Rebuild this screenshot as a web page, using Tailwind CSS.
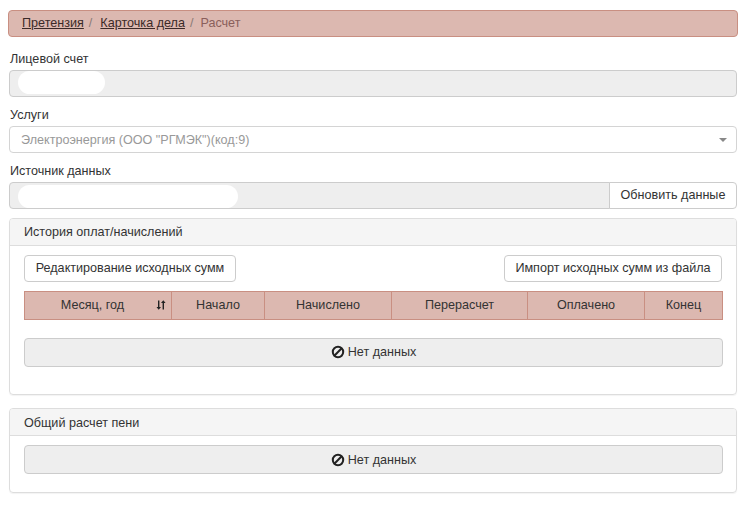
<!DOCTYPE html>
<html><head><meta charset="utf-8"><script src="https://cdn.jsdelivr.net/npm/@tailwindcss/browser@4"></script></head>
<body class="bg-white">
<div class="w-[742px] h-[513px] overflow-hidden pt-[10px] pl-[9px] pr-[5px] font-['Liberation_Sans',Arial,sans-serif] text-[12.6px] leading-[18px] text-[#333]">
  <nav class="-ml-px -mr-px h-[27px] flex items-center pl-[13px] pb-[2px] bg-[#dcb8b0] border border-[#c98f82] rounded-[4px] text-[#333]">
    <a class="underline text-[#3b2a28]">Претензия</a><span class="pl-[5px] pr-[7px] text-[#8a7a76]">/</span>
    <a class="underline ml-[1px] text-[#3b2a28]">Карточка дела</a><span class="pl-[5px] pr-[6px] text-[#8a7a76]">/</span>
    <span class="ml-[1px] text-[#8a5f5b]">Расчет</span>
  </nav>
  <div class="mt-[12px] h-[21px] pl-px pt-px">Лицевой счет</div>
  <div class="h-[27px] relative bg-[#eeeeee] border border-[#cccccc] rounded-[4px]">
    <div class="absolute left-[8px] top-0 w-[87px] h-[23px] bg-white rounded-full"></div>
  </div>
  <div class="mt-[8px] h-[21px] pl-px pt-px">Услуги</div>
  <div class="h-[27px] flex items-center justify-between pl-[11px] pr-[9px] bg-white border border-[#d4d4d4] rounded-[4px] text-[#999]">
    <span>Электроэнергия (ООО "РГМЭК")(код:9)</span>
    <span class="w-0 h-0 border-x-[4px] border-x-transparent border-t-[4px] border-t-[#888]"></span>
  </div>
  <div class="mt-[8px] h-[21px] pl-px pt-px">Источник данных</div>
  <div class="h-[27px] flex">
    <div class="flex-1 relative bg-[#eeeeee] border border-[#cccccc] rounded-l-[4px]">
      <div class="absolute left-[8px] top-[2px] w-[220px] h-[23px] bg-white rounded-full"></div>
    </div>
    <button class="w-[128px] -ml-px pb-[2px] bg-white border border-[#cccccc] rounded-r-[4px] text-[#333]">Обновить данные</button>
  </div>

  <section class="mt-[9px] h-[177px] border border-[#dddddd] rounded-[4px] shadow-[0_1px_1px_rgba(0,0,0,0.05)]">
    <div class="h-[27px] flex items-center pl-[14px] pb-[1px] bg-[#f5f5f5] border-b border-[#dddddd] rounded-t-[3px]">История оплат/начислений</div>
    <div class="pt-[9px] px-[14px]">
      <div class="flex justify-between">
        <button class="h-[27px] w-[212px] pb-[2px] bg-white border border-[#cccccc] rounded-[4px] text-[#333]">Редактирование исходных сумм</button>
        <button class="h-[27px] w-[218px] pb-[2px] bg-white border border-[#cccccc] rounded-[4px] text-[#333]">Импорт исходных сумм из файла</button>
      </div>
      <table class="mt-[9px] w-[698px] h-[28px] table-fixed border-collapse bg-[#dcb8b0] text-center">
        <colgroup><col class="w-[147px]"><col class="w-[93px]"><col class="w-[127px]"><col class="w-[136px]"><col class="w-[117px]"><col class="w-[78px]"></colgroup>
        <tr class="h-[28px]">
          <th class="relative font-normal p-0 pb-[1px] border border-[#c98f82] pr-[11px]">Месяц, год
            <svg class="absolute right-[5px] top-[8px]" width="10" height="10" viewBox="0 0 10 10" fill="#222"><path d="M2 0.5h1.4v6.5h1.6L2.7 9.7 0.5 7H2zM6.6 9.5h1.4V3h1.6L7.3 0.3 5 3h1.6z"/></svg>
          </th>
          <th class="font-normal p-0 pb-[1px] border border-[#c98f82]">Начало</th>
          <th class="font-normal p-0 pb-[1px] border border-[#c98f82]">Начислено</th>
          <th class="font-normal p-0 pb-[1px] border border-[#c98f82]">Перерасчет</th>
          <th class="font-normal p-0 pb-[1px] border border-[#c98f82]">Оплачено</th>
          <th class="font-normal p-0 pb-[1px] border border-[#c98f82]">Конец</th>
        </tr>
      </table>
      <div class="mt-[18px] w-[699px] h-[29px] flex items-center justify-center gap-[3px] pb-[1px] bg-[#eeeeee] border border-[#cccccc] rounded-[4px]">
        <svg width="14" height="14" viewBox="0 0 14 14" fill="none" stroke="#222" stroke-width="2"><circle cx="7" cy="7" r="5.2"/><path d="M3.3 10.7 10.7 3.3"/></svg>
        <span>Нет данных</span>
      </div>
    </div>
  </section>

  <section class="mt-[13px] h-[85px] border border-[#dddddd] rounded-[4px] shadow-[0_1px_1px_rgba(0,0,0,0.05)]">
    <div class="h-[27px] flex items-center pl-[14px] pt-[2px] bg-[#f5f5f5] border-b border-[#dddddd] rounded-t-[3px]">Общий расчет пени</div>
    <div class="pt-[9px] px-[14px]">
      <div class="w-[699px] h-[29px] flex items-center justify-center gap-[3px] pt-[1px] bg-[#eeeeee] border border-[#cccccc] rounded-[4px]">
        <svg width="14" height="14" viewBox="0 0 14 14" fill="none" stroke="#222" stroke-width="2"><circle cx="7" cy="7" r="5.2"/><path d="M3.3 10.7 10.7 3.3"/></svg>
        <span>Нет данных</span>
      </div>
    </div>
  </section>
</div>
</body></html>
